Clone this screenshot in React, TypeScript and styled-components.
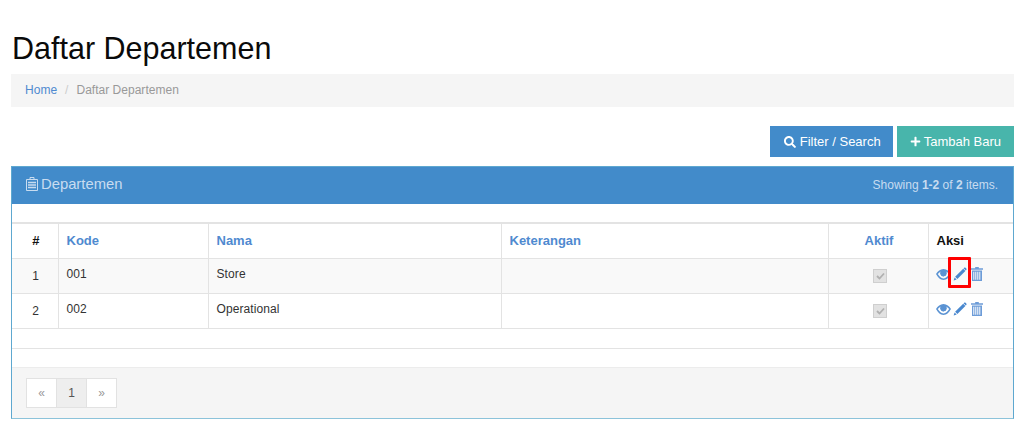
import React from 'react';
import styled, { createGlobalStyle } from 'styled-components';
import { FaSearch, FaPlus } from 'react-icons/fa';

const GlobalStyle = createGlobalStyle`
  html, body {
    margin: 0;
    padding: 0;
    background: #fff;
    font-family: "Liberation Sans", Arial, sans-serif;
    font-size: 12px;
    color: #333;
  }
`;

const Page = styled.div`
  width: 1024px;
  height: 439px;
  box-sizing: border-box;
  padding: 32px 10px 0 11px;
  overflow: hidden;
`;

const Title = styled.h1`
  margin: 0 0 9px 1px;
  font-size: 30.5px;
  line-height: 33px;
  font-weight: 400;
  color: #0a0a0a;
`;

const Breadcrumb = styled.div`
  height: 33px;
  box-sizing: border-box;
  display: flex;
  align-items: center;
  padding: 0 15px 2px 14px;
  background: #f5f5f5;
  font-size: 12px;
  letter-spacing: 0.02px;
  color: #999;
`;

const Crumb = styled.a`
  color: #4f8ad0;
`;

const Slash = styled.span`
  padding: 0 8px;
  color: #ccc;
`;

const Toolbar = styled.div`
  display: flex;
  justify-content: flex-end;
  gap: 4px;
  margin-top: 19px;
  margin-bottom: 9px;
`;

const Button = styled.button<{ $color: string }>`
  height: 31px;
  display: flex;
  align-items: center;
  gap: 3px;
  padding: 0 12px;
  border: 1px solid ${props => props.$color};
  border-radius: 0;
  background: ${props => props.$color};
  color: #fff;
  font-family: inherit;
  font-size: 13px;
  line-height: 1;
`;

const FilterButton = styled(Button)`
  gap: 4px;
  padding: 0 11px 0 13px;
`;

const Panel = styled.section`
  height: 253px;
  box-sizing: border-box;
  display: flex;
  flex-direction: column;
  border: 1px solid #5ea8d0;
  border-bottom-color: #8cc3da;
`;

const PanelHeading = styled.header`
  height: 37px;
  box-sizing: border-box;
  flex: none;
  display: flex;
  align-items: center;
  justify-content: space-between;
  padding: 0 15px 3px 14px;
  background: #428bca;
  color: #c8dcf0;
`;

const PanelTitle = styled.div`
  display: flex;
  align-items: center;
  gap: 3px;
  font-size: 14.800px;
`;

const Summary = styled.div`
  padding-top: 1px;
  font-size: 12px;
  b {
    font-weight: 700;
  }
`;

const Gap = styled.div`
  height: 18px;
  flex: none;
`;

const Table = styled.table`
  width: 1001px;
  table-layout: fixed;
  border-collapse: collapse;
  flex: none;
  font-size: 12px;
`;

const Th = styled.th<{ $align?: string; $link?: boolean }>`
  height: 35px;
  box-sizing: border-box;
  padding: 0 8px;
  border: 1px solid #e3e3e3;
  border-top-width: 2px;
  text-align: ${props => props.$align || 'left'};
  color: ${props => (props.$link ? '#4f8ad0' : '#111')};
  font-size: 13px;
  font-weight: 700;
  &:first-child { border-left: 0; padding-left: 10px; }
  &:last-child { border-right: 0; }
`;

const AktifTh = styled(Th)`
  padding-left: 10px;
`;

const Td = styled.td<{ $align?: string; $low?: boolean }>`
  height: 35px;
  box-sizing: border-box;
  padding: 0 8px ${props => (props.$low ? 0 : 3)}px;
  border: 1px solid #e3e3e3;
  text-align: ${props => props.$align || 'left'};
  color: #333;
  letter-spacing: 0.1px;
  &:first-child { border-left: 0; padding-left: 10px; }
  &:last-child { border-right: 0; }
`;

const Row = styled.tr<{ $striped?: boolean }>`
  background: ${props => (props.$striped ? '#f9f9f9' : '#fff')};
`;

const Check = styled.span`
  display: inline-flex;
  align-items: center;
  justify-content: center;
  width: 14px;
  height: 14px;
  box-sizing: border-box;
  margin-left: 4px;
  border: 1px solid #cfcfcf;
  background: #e2e2e2;
  vertical-align: middle;
`;

const Actions = styled.div`
  display: flex;
  align-items: center;
  gap: 2px;
  margin-left: -1px;
`;

const Marked = styled.span<{ $marked?: boolean }>`
  position: relative;
  display: inline-flex;
  margin-right: 2px;
  ${props => props.$marked && `
    &::after {
      content: '';
      position: absolute;
      left: -5px;
      top: -10px;
      width: 17px;
      height: 25px;
      border: 3px solid #f00;
      border-radius: 1px;
    }
  `}
`;

const Blank = styled.div`
  height: 19px;
  flex: none;
  border-bottom: 1px solid #e3e3e3;
`;

const PanelFooter = styled.footer`
  flex: 1;
  display: flex;
  align-items: center;
  padding: 0 14px;
  background: #f5f5f5;
  border-top: 1px solid #ececec;
`;

const Pager = styled.div`
  display: flex;
`;

const PageCell = styled.span<{ $active?: boolean }>`
  width: 31px;
  height: 30px;
  box-sizing: border-box;
  display: flex;
  align-items: center;
  justify-content: center;
  margin-right: -1px;
  border: 1px solid #e2e2e2;
  background: ${props => (props.$active ? '#eee' : '#fff')};
  color: ${props => (props.$active ? '#555' : '#999')};
  font-size: 12px;
`;

const ClipboardIcon = () => (
  <svg width="12" height="14" viewBox="0 0 12 14" fill="none" stroke="#c8dcf0">
    <path d="M4 .5h4v2H4z" />
    <path d="M.5 2.500h11v11H.5z" />
    <path strokeWidth="1.400" d="M2 5.500h8M2 8h8M2 10.500h8" />
  </svg>
);

const EyeIcon = () => (
  <svg width="15" height="11" viewBox="0 0 15 11" fill="#5b93d3">
    <path fillRule="evenodd" d="M7.500 0C4.300 0 1.700 2.200 0 5c1.700 3 4.300 6 7.500 6S13.300 8 15 5C13.300 2.200 10.700 0 7.500 0zM1.800 5.100c.8-1 1.800-2 2.900-2.700A4 4 0 0 0 4.200 4.700 3.400 3.400 0 0 0 10.800 4.700a4 4 0 0 0-.5-2.300c1.100.7 2.100 1.700 2.900 2.700-1.300 1.900-3.300 4.400-5.700 4.400S3.100 7 1.800 5.100z" />
    <path d="M6.600 2A2.700 2.700 0 1 0 9.800 3.700 1.200 1.200 0 1 1 7.300 2.100z" />
  </svg>
);

const PencilIcon = () => (
  <svg width="14" height="14" viewBox="0 0 14 14" fill="#4a88cf">
    <path d="M10.200 1.700 12.400 3.900 4.400 11.900 2.100 9.700z" />
    <path d="M11 .9c.5-.5 1.100-.5 1.500-.1l.8.800c.4.400.4 1 0 1.400l-.5.500-2.300-2.200z" />
    <path d="M1.600 10.400 3.700 12.500 .6 13.500z" />
  </svg>
);

const TrashIcon = () => (
  <svg width="12" height="14" viewBox="0 0 12 14" fill="#6d9cd8">
    <path d="M4.200 0h3.600v1.200H12v1.500H0V1.200h4.200z" />
    <path fillRule="evenodd" d="M1 3.500h10V14H1zM2.300 4.700v8.100h1V4.700zM4.300 4.700v8.100h1V4.700zM6.300 4.700v8.100h1V4.700zM8.300 4.700v8.100h1V4.700z" />
  </svg>
);

const CheckMark = () => (
  <svg width="9" height="8" viewBox="0 0 9 8" fill="none" stroke="#b0b0b0" strokeWidth="1.800">
    <path d="M1 4l2.500 2.500L8 1.500" />
  </svg>
);

const rows = [
  { no: 1, kode: '001', nama: 'Store', marked: true },
  { no: 2, kode: '002', nama: 'Operational', marked: false },
];

export default function App() {
  return (
    <Page>
      <GlobalStyle />
      <Title>Daftar Departemen</Title>
      <Breadcrumb>
        <Crumb>Home</Crumb>
        <Slash>/</Slash>
        Daftar Departemen
      </Breadcrumb>
      <Toolbar>
        <FilterButton $color="#428bca"><FaSearch size={12} /> Filter / Search</FilterButton>
        <Button $color="#48b5ab"><FaPlus size={11} /> Tambah Baru</Button>
      </Toolbar>
      <Panel>
        <PanelHeading>
          <PanelTitle><ClipboardIcon /> Departemen</PanelTitle>
          <Summary>Showing <b>1-2</b> of <b>2</b> items.</Summary>
        </PanelHeading>
        <Gap />
        <Table>
          <colgroup>
            <col style={{ width: 46 }} />
            <col style={{ width: 150 }} />
            <col style={{ width: 293 }} />
            <col style={{ width: 327 }} />
            <col style={{ width: 100 }} />
            <col style={{ width: 85 }} />
          </colgroup>
          <thead>
            <tr>
              <Th $align="center">#</Th>
              <Th $link>Kode</Th>
              <Th $link>Nama</Th>
              <Th $link>Keterangan</Th>
              <AktifTh $link $align="center">Aktif</AktifTh>
              <Th>Aksi</Th>
            </tr>
          </thead>
          <tbody>
            {rows.map(row => (
              <Row key={row.no} $striped={row.no === 1}>
                <Td $align="center" $low>{row.no}</Td>
                <Td>{row.kode}</Td>
                <Td>{row.nama}</Td>
                <Td />
                <Td $align="center" $low><Check><CheckMark /></Check></Td>
                <Td>
                  <Actions>
                    <EyeIcon />
                    <Marked $marked={row.marked}><PencilIcon /></Marked>
                    <TrashIcon />
                  </Actions>
                </Td>
              </Row>
            ))}
          </tbody>
        </Table>
        <Blank />
        <Gap />
        <PanelFooter>
          <Pager>
            <PageCell>«</PageCell>
            <PageCell $active>1</PageCell>
            <PageCell>»</PageCell>
          </Pager>
        </PanelFooter>
      </Panel>
    </Page>
  );
}
